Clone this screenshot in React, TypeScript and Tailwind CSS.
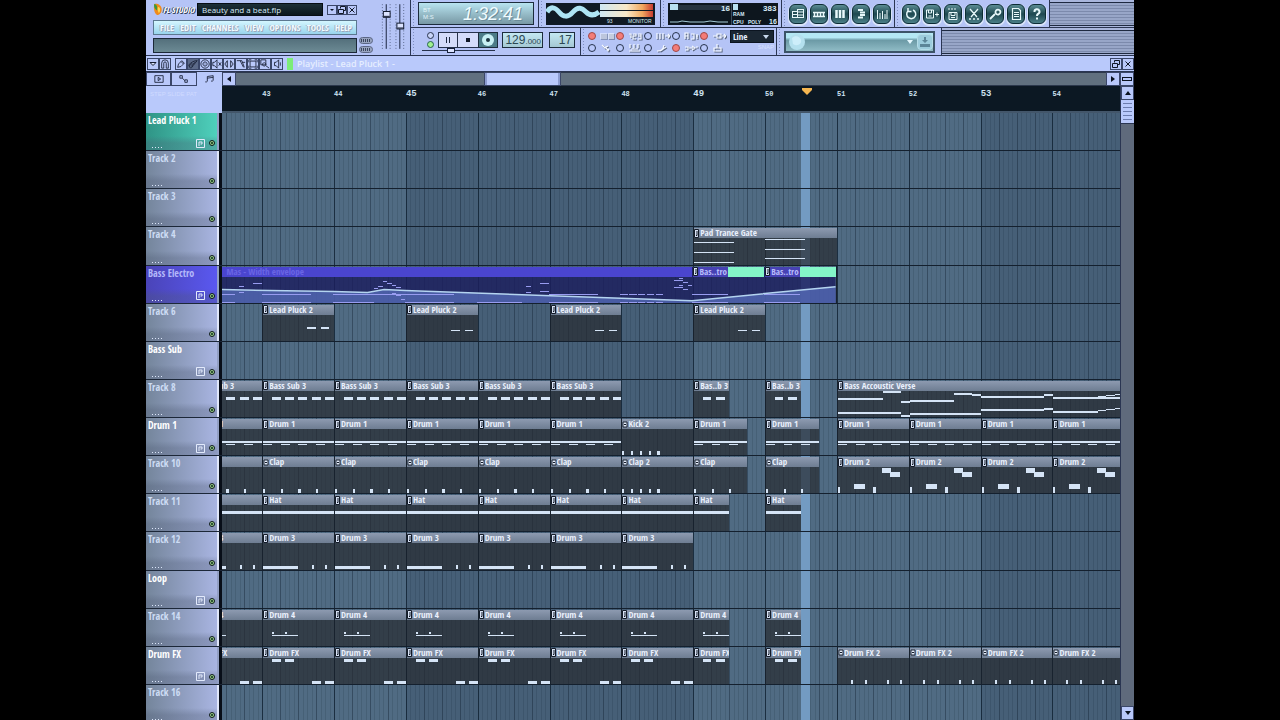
import type { ReactNode } from "react";

const FIRST_BAR = 42.44;
const VISIBLE_BARS = 12.5;

// x and w in steps (16 per bar), y and h from the top of the clip body
type Note = [x: number, y: number, w: number, h: number];

type Clip = {
  name: string;
  start: number;
  len: number;
  notes: Note[];
  audio?: boolean;
};

type Track = {
  name: string;
  group?: boolean;
  tone?: "teal" | "violet";
  clips?: Clip[];
};

const pct = (bars: number) => `${(bars / VISIBLE_BARS) * 100}%`;
const barLeft = (bar: number) => pct(bar - FIRST_BAR);

function repeat(name: string, starts: number[], len: number, notes: Note[], audio = false): Clip[] {
  return starts.map((start) => ({ name, start, len, notes, audio }));
}

const ticks = (steps: number[], y = 23, h = 4): Note[] => steps.map((s) => [s, y, 0.5, h]);
const dashes = (steps: number[], y: number, h: number): Note[] => steps.map((s) => [s, y, 2, h]);

const DRUM1: Note[] = [[0, 12, 16, 2], ...dashes([0, 4, 8, 12], 16, 1)];
const DRUM2: Note[] = [
  [3.7, 18, 2.3, 5],
  [10, 1, 2, 5],
  [11.8, 5, 2.3, 5],
  ...ticks([0, 8], 21, 6),
];
const DRUM3: Note[] = [[0, 24, 8, 3], ...ticks([11, 14], 23, 4)];
const DRUM4: Note[] = [[2, 15, 6, 2], ...ticks([2, 5], 12, 2)];
const DRUM_FX: Note[] = [...dashes([2, 5], 1, 3), ...dashes([11, 14], 24, 3)];

const VERSE: Note[] = [
  [0, 7, 10, 2], [10, 0, 4, 2], [14, 10, 2, 2], [0, 22, 14, 2], [14, 25, 2, 2],
  [16, 9, 10, 2], [26, 2, 4, 2], [30, 3, 2, 2], [16, 23, 16, 2],
  [32, 5, 14, 2], [46, 3, 2, 2], [32, 19, 14, 2], [46, 18, 2, 2],
  [48, 6, 16, 2], [58, 5, 2, 1], [60, 4, 2, 1], [62, 3, 2, 1],
  [48, 21, 10, 2], [58, 20, 2, 1], [60, 19, 2, 1], [62, 18, 2, 1],
];

const ELECTRO: Note[] = [
  [0, 18, 10, 1], [0, 26, 10, 1], [11, 9, 1, 1], [11, 16, 1, 1], [14, 6, 2, 1],
  [16, 18, 11, 1], [16, 26, 11, 1], [32, 18, 16, 1], [32, 26, 9, 1],
  [41, 11, 1, 1], [42, 9, 1, 1], [43, 4, 1, 1], [44, 6, 1, 1], [45, 8, 1, 1], [46, 10, 1, 1],
  [44, 15, 1, 1], [45, 17, 1, 1], [46, 19, 1, 1], [47, 23, 1, 1],
  [48, 18, 11, 1], [48, 26, 11, 1], [64, 26, 10, 1],
  [75, 9, 1, 1], [75, 16, 1, 1], [78, 6, 2, 1], [78, 14, 2, 1],
  [80, 18, 11, 1], [80, 26, 11, 1],
  ...[96, 98, 100, 102, 104].flatMap((s): Note[] => [[s, 18, 1.6, 1], [s, 26, 1.6, 1]]),
  [108, 3, 2, 1], [109, 1, 1, 1], [110, 5, 1, 1], [111, 8, 1, 1],
  [108, 10, 2, 1], [109, 8, 1, 1], [110, 12, 1, 1], [111, 15, 1, 1],
  [112, 18, 8, 1], [112, 26, 8, 1], [128, 18, 8, 1], [128, 26, 8, 1],
];

const TRACKS: Track[] = [
  { name: "Lead Pluck 1", group: true, tone: "teal" },
  { name: "Track 2" },
  { name: "Track 3" },
  {
    name: "Track 4",
    clips: repeat("Pad Trance Gate", [49], 2, [
      [0, 4, 9, 1], [0, 14, 9, 1], [0, 25, 9, 1],
      [16, 1, 9, 1], [16, 11, 9, 1], [16, 21, 9, 1],
    ]),
  },
  { name: "Bass Electro", group: true, tone: "violet" },
  {
    name: "Track 6",
    clips: [
      ...repeat("Lead Pluck 2", [43], 1, dashes([10, 13], 12, 2)),
      ...repeat("Lead Pluck 2", [45, 47, 49], 1, dashes([10, 13], 15, 2)),
    ],
  },
  { name: "Bass Sub", group: true },
  {
    name: "Track 8",
    clips: [
      ...repeat("Bass Sub 3", [42, 43, 44, 45, 46, 47], 1, dashes([2, 5, 8, 11, 14], 6, 3)),
      ...repeat("Bas..b 3", [49, 50], 0.5, dashes([2, 5], 6, 3)),
      ...repeat("Bass Accoustic Verse", [51], 4, VERSE),
    ],
  },
  {
    name: "Drum 1",
    group: true,
    clips: [
      ...repeat("Drum 1", [42, 43, 44, 45, 46, 47], 1, DRUM1),
      ...repeat("Kick 2", [48], 1, ticks([0, 2, 4, 6, 8]), true),
      ...repeat("Drum 1", [49, 50], 0.75, DRUM1),
      ...repeat("Drum 1", [51, 52, 53, 54], 1, DRUM1),
    ],
  },
  {
    name: "Track 10",
    clips: [
      ...repeat("Clap", [42, 43, 44, 45, 46, 47], 1, ticks([0, 4, 8, 12]), true),
      ...repeat("Clap 2", [48], 1, ticks([0, 2, 4, 6, 8]), true),
      ...repeat("Clap", [49, 50], 0.75, ticks([0, 4, 8]), true),
      ...repeat("Drum 2", [51, 52, 53, 54], 1, DRUM2),
    ],
  },
  {
    name: "Track 11",
    clips: [
      ...repeat("Hat", [42, 43, 44, 45, 46, 47, 48], 1, [[0, 6, 16, 3]]),
      ...repeat("Hat", [49, 50], 0.5, [[0, 6, 8, 3]]),
    ],
  },
  { name: "Track 12", clips: repeat("Drum 3", [42, 43, 44, 45, 46, 47, 48], 1, DRUM3) },
  { name: "Loop", group: true },
  {
    name: "Track 14",
    clips: [
      ...repeat("Drum 4", [42, 43, 44, 45, 46, 47, 48], 1, DRUM4),
      ...repeat("Drum 4", [49, 50], 0.5, DRUM4),
    ],
  },
  {
    name: "Drum FX",
    group: true,
    clips: [
      ...repeat("Drum FX", [42, 43, 44, 45, 46, 47, 48], 1, DRUM_FX),
      ...repeat("Drum FX", [49, 50], 0.5, dashes([2, 5], 1, 3)),
      ...repeat("Drum FX 2", [51, 52, 53, 54], 1, ticks([3, 6, 11, 14], 23, 4), true),
    ],
  },
  { name: "Track 16" },
];

const MENUS = ["FILE", "EDIT", "CHANNELS", "VIEW", "OPTIONS", "TOOLS", "HELP"];
const BARS = [43, 44, 45, 46, 47, 48, 49, 50, 51, 52, 53, 54];

const NARROW = "font-['Liberation_Sans_Narrow','Open_Sans_Condensed','Roboto',sans-serif]";
const LCD = "border border-[#1c2c3c] bg-linear-to-b from-[#b8e4f0] to-[#7898a4]";
const LCD_LIGHT = "border border-[#1c2c3c] bg-linear-to-b from-[#c4e8f2] to-[#a4c8d4]";

/* ---------- toolbar ---------- */

function Grip() {
  return (
    <span className="w-1 shrink-0 self-stretch bg-[radial-gradient(#7d8cc0_1px,transparent_1px)] bg-size-[3px_3px]" />
  );
}

function Panel({ className, children }: { className: string; children: ReactNode }) {
  return (
    <div className={`flex h-7 shrink-0 items-center gap-0.5 border-r border-b border-[#2a3552] bg-[#b5c4f6] pl-px ${className}`}>
      <Grip />
      {children}
    </div>
  );
}

function TinyButton({ label, className = "", children }: { label: string; className?: string; children: ReactNode }) {
  return (
    <button
      type="button"
      aria-label={label}
      className={`flex items-center justify-center border border-[#3a4668] bg-[#b9c8fa] ${className}`}
    >
      {children}
    </button>
  );
}

function RestoreIcon() {
  return (
    <svg viewBox="0 0 8 8" className="size-2 shrink-0" fill="none" stroke="#111827">
      <path d="M2.500 2.500v-2h5v4h-2M.5 3.500h5v4h-5z" />
    </svg>
  );
}

function CloseIcon() {
  return (
    <svg viewBox="0 0 8 8" className="size-2 shrink-0" stroke="#111827">
      <path d="M1.500 1.500l5 5M6.500 1.500l-5 5" />
    </svg>
  );
}

function Arrow({ d }: { d: string }) {
  return (
    <svg viewBox="0 0 8 8" className="size-2 shrink-0" fill="#0b1220">
      <path d={d} />
    </svg>
  );
}

function TitleBlock() {
  return (
    <div className="flex h-14 w-[232px] shrink-0 border-b border-[#2a3552] bg-[#b5c4f6] pt-[3px] pl-[7px]">
      <div className="flex w-[204px] flex-col">
        <div className="flex h-[13px] items-center">
          <svg viewBox="0 0 10 14" className="h-[13px] w-2.5 shrink-0">
            <path d="M1 1c3-1 8 1 8 6 0 3-2 6-5 6C1 11 0 6 1 1z" fill="#f08a1c" />
            <path d="M1 1c2 0 4 3 3 7-2-1-4-4-3-7z" fill="#3c9a3a" />
            <path d="M5 4c3 1 3 4 1 7-1-2-2-4-1-7z" fill="#ffd84a" />
          </svg>
          <span className={`${NARROW} w-[34px] shrink-0 text-[8px] leading-[13px] font-bold whitespace-nowrap text-white italic [text-shadow:1px_1px_0_#30405c,-1px_0_0_#30405c]`}>
            FL STUDIO
          </span>
          <div className="h-[13px] flex-1 truncate border border-[#070d14] bg-linear-to-b from-[#1d3038] to-[#0c161c] pl-1 font-['Open_Sans',sans-serif] text-[8px] leading-[11px] font-medium text-[#d8ecf8]">
            Beauty and a beat.flp
          </div>
          <div className="ml-1 flex">
            <TinyButton label="Minimize" className="h-2.5 w-2.5"><Arrow d="M2 3h4L4 5z" /></TinyButton>
            <TinyButton label="Restore" className="h-2.5 w-2.5"><RestoreIcon /></TinyButton>
            <TinyButton label="Close" className="h-2.5 w-2.5"><CloseIcon /></TinyButton>
          </div>
        </div>
        <nav className="mt-1 flex h-[15px] items-center justify-between border border-[#5c7890] bg-linear-to-b from-[#d4f6ff] to-[#98d4ec] pr-1 pl-1.5">
          {MENUS.map((m) => (
            <button
              key={m}
              type="button"
              className={`${NARROW} text-[9px] leading-3 font-bold text-[#f2faff] [text-shadow:1px_1px_0_#9aa8bc,-1px_0_0_#a8b4c4]`}
            >
              {m}
            </button>
          ))}
        </nav>
        <div className="mt-[3px] h-[15px] border border-[#1c2838] bg-linear-to-b from-[#54707c] to-[#6c8a94]" />
      </div>
      <div className="flex flex-col justify-end gap-0.5 pb-0.5 pl-0.5">
        {["Hint", "Snap"].map((l) => (
          <button key={l} type="button" aria-label={l} className="h-[7px] w-[14px] rounded-full border border-[#5b6684] bg-[#98a4c0] p-px">
            <span className="block h-full w-full bg-[repeating-linear-gradient(90deg,#3c465e_0_1px,transparent_1px_2px)]" />
          </button>
        ))}
      </div>
    </div>
  );
}

function MainSliders() {
  return (
    <div className="h-14 w-[33px] shrink-0 border-r border-b border-[#2a3552] bg-[#b5c4f6]">
      <svg viewBox="0 0 33 56" className="h-full w-full">
        <g stroke="#5a678c" strokeDasharray="1 2">
          <path d="M4.500 4v46M12.500 4v46M18.500 4v46M26.500 4v46" />
        </g>
        <path d="M8.500 4v46M22.500 4v46" stroke="#16203a" />
        <g fill="#dbe3ff" stroke="#0f182c">
          <rect x="5.500" y="11.500" width="7" height="6" />
          <rect x="19.500" y="23.500" width="7" height="6" />
        </g>
        <path d="M6 16.500h6M20 28.500h6" stroke="#0f182c" />
      </svg>
    </div>
  );
}

function TimePanel() {
  return (
    <Panel className="w-32">
      <div className={`${LCD} flex h-[23px] w-[116px] items-center pl-1`}>
        <span className="flex flex-col font-['Liberation_Sans',sans-serif] text-[6px] leading-[7px] text-[#e2f4fa]">
          <span>BT</span>
          <span>M:S</span>
        </span>
        <span className="ml-auto pr-2.5 font-['Liberation_Sans',sans-serif] text-[18px] leading-5 text-[#effbff] italic [text-shadow:1px_1px_0_#6c8c98]">
          1:32:41
        </span>
      </div>
    </Panel>
  );
}

function MonitorPanel() {
  return (
    <Panel className="w-[122px]">
      <svg viewBox="0 0 109 22" className="h-[22px] w-[109px] shrink-0">
        <defs>
          <linearGradient id="peak">
            <stop offset="0" stopColor="#cfe8f4" />
            <stop offset=".5" stopColor="#f8e8c8" />
            <stop offset=".8" stopColor="#f0a860" />
            <stop offset="1" stopColor="#c83c30" />
          </linearGradient>
        </defs>
        <rect width="109" height="22" fill="#101a24" />
        <path d="M1 9c4-6 8-5 12 0s9 6 14 0 9-4 13 0 8 4 13 0" fill="none" stroke="#aee4f4" strokeWidth="5" />
        <rect x="54" y="1" width="53" height="6" fill="url(#peak)" />
        <rect x="54" y="8" width="53" height="6" fill="url(#peak)" />
        <text x="61" y="20" fontSize="5" fill="#d8e8f0" fontFamily="Liberation Sans">93</text>
        <text x="82" y="20" fontSize="5" fill="#d8e8f0" fontFamily="Liberation Sans">MONITOR</text>
      </svg>
    </Panel>
  );
}

function CpuPanel() {
  return (
    <Panel className="w-[121px]">
      <svg viewBox="0 0 110 22" className="h-[22px] w-[110px] shrink-0" fontFamily="Liberation Sans" fontWeight="bold" fill="#d8ecf8">
        <rect width="110" height="22" fill="#0d161e" />
        <rect x="2" y="2" width="60" height="5" fill="#26333e" />
        <rect x="2" y="1" width="8" height="6" fill="#b8e0f0" />
        <rect x="65" y="1" width="5" height="6" fill="#b8e0f0" />
        <path d="M63.500 0v22" stroke="#3c4c5a" />
        <path d="M2 19h8l4-1 8 1h14l6-1 8 1h10" stroke="#a8ccd8" fill="none" />
        <text x="53" y="8" fontSize="8">16</text>
        <text x="95" y="8" fontSize="8">383</text>
        <text x="65" y="13" fontSize="5">RAM</text>
        <text x="65" y="21" fontSize="5">CPU</text>
        <text x="80" y="21" fontSize="5">POLY</text>
        <text x="101" y="21" fontSize="7">16</text>
      </svg>
    </Panel>
  );
}

function RoundButton({ label, children }: { label: string; children: ReactNode }) {
  return (
    <button
      type="button"
      aria-label={label}
      className="flex h-5 w-[18px] items-center justify-center rounded-md border border-[#0c2c34] bg-linear-to-b from-[#5c8e94] via-[#1e4850] to-[#4c8088] shadow-[0_1px_0_1px_#d8e4f8]"
    >
      <svg viewBox="0 0 14 14" className="size-3.5 shrink-0" fill="none" stroke="#e8f8fa">
        {children}
      </svg>
    </button>
  );
}

function WindowButtons() {
  return (
    <Panel className="w-[113px]">
      <div className="flex gap-[3px]">
        <RoundButton label="Playlist"><path d="M1.500 4.500h5M1.500 7.500h5M1.500 10.500h11M6.500 2.500h6M6.500 5h6M6.500 8h6M6.500 2v9M12.500 2v9M1.500 4v7" /></RoundButton>
        <RoundButton label="Step sequencer"><path d="M1 5.500h12M1 9.500h12M2.500 5v5M5.500 5v5M8.500 5v5M11.500 5v5" strokeWidth="1.500" /></RoundButton>
        <RoundButton label="Piano roll"><path d="M3.500 3v8M7 3v8M10.500 3v8" strokeWidth="2.500" /></RoundButton>
        <RoundButton label="Browser"><path d="M4 3h5M6 5.500h5M6 8h5M4 10.500h5" strokeWidth="2" /></RoundButton>
        <RoundButton label="Mixer"><path d="M2.500 3v9M5 6v6M7.500 4v8M10 7v5M12 3v9" /></RoundButton>
      </div>
    </Panel>
  );
}

function ShortcutButtons() {
  return (
    <Panel className="w-[155px]">
      <div className="flex gap-[3px]">
        <RoundButton label="Undo"><path d="M4 4a4.500 4.500 0 1 0 5-1M4 1v3.500h3.500" strokeWidth="1.500" /></RoundButton>
        <RoundButton label="Save new version"><path d="M1.500 3h7v8h-7zM3.500 3v3h3V3M10 7.500h4M12 5.500v4M3.500 9h3" /></RoundButton>
        <RoundButton label="Render"><path d="M3 1v2M6 1v2M9 1v2M3 5.500h8v7H3zM5 6v2.500h4V6M5 10.500h4" /></RoundButton>
        <RoundButton label="Edison"><path d="M3 2l7 8M11 2L4 10M2 12h2M6 12h2M10 12h2" strokeWidth="1.300" /></RoundButton>
        <RoundButton label="One-click recording"><path d="M2 12l5-5M8 3.500a2.500 2.500 0 1 1 2.500 4A2.500 2.500 0 0 1 8 3.500z" strokeWidth="1.800" /></RoundButton>
        <RoundButton label="Project info"><path d="M3.500 1.500h6l2 2v9h-8zM5 5.500h5M5 7.500h5M5 9.500h5" strokeWidth="1.200" /></RoundButton>
        <RoundButton label="Help"><path d="M4.500 5a2.500 2.500 0 1 1 3.500 2c-1 .5-1 1-1 2M7 10.500v2" strokeWidth="2" /></RoundButton>
      </div>
    </Panel>
  );
}

function Stripes() {
  return (
    <div className="flex h-7 flex-1 items-center border-b border-[#2a3552] bg-[#a9b6dc]">
      <div className="h-6 w-full border-y border-[#1e2940] bg-[repeating-linear-gradient(180deg,#98a6c8_0_2px,#7c8aac_2px_3px)]" />
    </div>
  );
}

function TransportPanel() {
  return (
    <Panel className="w-[170px]">
      <div className="flex w-full pt-0.5">
        <div className="mr-1 flex w-20 flex-col">
          <div className="flex h-[16px] items-stretch">
            <div className="flex w-5 flex-col items-end justify-between pr-1">
              <input type="radio" name="mode" aria-label="Pattern mode" className="size-[7px] appearance-none rounded-full border border-[#26324c] bg-[#c8d4f8]" />
              <input type="radio" name="mode" aria-label="Song mode" defaultChecked className="size-[7px] appearance-none rounded-full border border-[#26624c] bg-[#a0f090]" />
            </div>
            <button type="button" aria-label="Pause" className="flex w-5 items-center justify-center border border-[#26324c] bg-[#d4dcfa]">
              <svg viewBox="0 0 8 8" className="size-2" fill="#1c2840"><path d="M2 1h1v6H2zM5 1h1v6H5z" /></svg>
            </button>
            <button type="button" aria-label="Stop" className="flex w-5 items-center justify-center border-y border-[#26324c] bg-[#d4dcfa]">
              <svg viewBox="0 0 8 8" className="size-2" fill="#111827"><path d="M2 2h4v4H2z" /></svg>
            </button>
            <button type="button" aria-label="Record" className="flex w-5 items-center justify-center border border-[#1c2c3c] bg-[#4c7c88]">
              <span className="flex size-3 items-center justify-center rounded-full bg-[#c8f0f4]">
                <span className="size-1 rounded-full bg-[#1c3440]" />
              </span>
            </button>
          </div>
          <input
            type="range"
            aria-label="Song position"
            defaultValue={38}
            className="ml-1 h-[6px] w-[73px] appearance-none bg-[linear-gradient(#26324c,#26324c)] bg-size-[100%_1px] bg-center bg-no-repeat [&::-webkit-slider-thumb]:h-[5px] [&::-webkit-slider-thumb]:w-2 [&::-webkit-slider-thumb]:appearance-none [&::-webkit-slider-thumb]:border [&::-webkit-slider-thumb]:border-[#16203a] [&::-webkit-slider-thumb]:bg-[#dbe3ff]"
          />
        </div>
        <div className={`${LCD_LIGHT} mr-1.5 h-4 w-[41px] pr-px text-right font-['Liberation_Sans',sans-serif] text-[12px] leading-[14px] whitespace-nowrap text-[#2c4854]`}>
          129<span className="text-[8px]">.000</span>
        </div>
        <div className={`${LCD_LIGHT} h-4 w-[26px] pr-0.5 text-right font-['Liberation_Sans',sans-serif] text-[12px] leading-[14px] text-[#2c4854]`}>
          17
        </div>
      </div>
    </Panel>
  );
}

const SWITCHES: { label: string; on: boolean; d: string }[] = [
  { label: "Typing keyboard", on: true, d: "M0 2h7M0 4h7M0 6h7M9 1v6M11 1v6M13 1v6" },
  { label: "Countdown", on: true, d: "M1 2h2v4M5 2h3v2H5v3h3M10 2h3v5h-3M10 4h3" },
  { label: "Step edit", on: false, d: "M1 1v6M4 1v6M7 1v6M9 4h5M12 2l2 2-2 2" },
  { label: "Overdub", on: false, d: "M1 7V1h3v3H1M4 4v3M7 2h3v5H7M12 4h2M13 2v5" },
  { label: "Loop record", on: true, d: "M1 4h4M5 2h4v4H5zM10 4h4M12 2l2 2-2 2" },
  { label: "Metronome", on: false, d: "M2 1l3 3M5 3l4 4M4 4l4-2M7 7l2-2" },
  { label: "Wait for input", on: false, d: "M2 0v4M6 0v4M10 0v4M1 7h11M3 5h7" },
  { label: "Blend notes", on: false, d: "M1 7c4 0 6-1 7-6M4 7l6-4" },
  { label: "Auto-scroll", on: true, d: "M1 3h3v3H1M5 4h4M8 2l3 2-3 2M12 3h2" },
  { label: "Multilink", on: false, d: "M5 0v4M2 4h7v3H2z" },
];

function SwitchPanel() {
  return (
    <Panel className="w-[196px]">
      <div className="grid w-[140px] shrink-0 grid-cols-5 gap-y-1">
        {SWITCHES.map((s) => (
          <label key={s.label} className="flex items-center gap-1">
            <input
              type="checkbox"
              aria-label={s.label}
              defaultChecked={s.on}
              className="size-2 shrink-0 appearance-none rounded-full border border-[#26324c] bg-[#b9c8fa] checked:border-[#a04848] checked:bg-[#f47c78]"
            />
            <svg viewBox="0 0 14 8" className="h-2 w-3.5 drop-shadow-[1px_1px_0_#58647c]" fill="none" stroke="#f4f8ff">
              <path d={s.d} strokeWidth="1.200" />
            </svg>
          </label>
        ))}
      </div>
      <div className="flex h-full shrink-0 flex-col pt-0.5">
        <div className="flex h-[13px] w-11 items-center border border-[#0b1420] bg-[#1a2632]">
          <select
            aria-label="Snap"
            className={`${NARROW} w-full appearance-none pl-0.5 text-[9px] leading-[11px] font-bold text-[#e4eefc]`}
          >
            <option>Line</option>
          </select>
          <svg viewBox="0 0 6 4" className="mr-1 h-1 w-1.5 shrink-0" fill="#c8d8ec"><path d="M0 0h6L3 4z" /></svg>
        </div>
        <span className="text-right font-['Liberation_Sans',sans-serif] text-[6px] leading-2 text-[#d6e0ff]">SNAP</span>
      </div>
    </Panel>
  );
}

function OnlinePanel() {
  return (
    <Panel className="w-[165px]">
      <div className="flex h-[22px] w-[151px] items-center border-2 border-[#3c5468] bg-linear-to-b from-[#b4e8f4] from-25% via-[#6c9aa6] via-40% to-[#90bcc6]">
        <svg viewBox="0 0 18 18" className="ml-0.5 size-[18px]" fill="#b4e0ee">
          <circle cx="9" cy="9" r="8" />
          <path d="M4 5c3-3 8-2 9 2s-4 7-8 4" fill="#cdeefa" />
        </svg>
        <svg viewBox="0 0 6 4" className="ml-auto h-1 w-1.5" fill="#e4f8ff"><path d="M0 0h6L3 4z" /></svg>
        <button type="button" aria-label="Download" className="ml-1 flex size-4 items-center justify-center rounded-sm border border-[#b4dce8] bg-[#9cccdc]">
          <svg viewBox="0 0 12 12" className="size-3 shrink-0" fill="#5c8698">
            <path d="M5 1h2v3h2L6 7 3 4h2zM1 8h10v3H1z" />
          </svg>
        </button>
      </div>
    </Panel>
  );
}

/* ---------- playlist window ---------- */

const TOOLS: { label: string; d: string; active?: boolean }[] = [
  { label: "Draw", d: "M2 10l1-4 4-4 3 3-4 4zM6 3l3 3" },
  { label: "Paint", d: "M1 7c3-3 6-5 10-5L6 8c-1 3-3 3-4 2zM2 8l3-3M4 9l4-5", active: true },
  { label: "Delete", d: "M6 1a5 5 0 1 0 .1 0M6 3.500a2.500 2.500 0 1 0 .1 0M6 5.500v1" },
  { label: "Mute", d: "M1 4h2l3-3v10L3 8H1zM8 4l3 4M11 4L8 8" },
  { label: "Slip", d: "M4 2v8L1 6zM8 2v8l3-4z" },
  { label: "Slice", d: "M1 2h6l3 8M5 2l4 8M8 4h3" },
  { label: "Select", d: "M2.500 2.500h7v7h-7zM1 4V1h3M8 1h3v3M11 8v3H8M4 11H1V8" },
  { label: "Zoom", d: "M1 1h6v6H1zM5 4.500a2 2 0 1 0 .1 0M7 8l4 3" },
  { label: "Playback", d: "M3 4h2l3-3v10L5 8H3zM10 4v4" },
];

function ToolIcon({ d }: { d: string }) {
  return (
    <svg viewBox="0 0 12 12" className="size-2.5 shrink-0" fill="none" stroke="#141c30">
      <path d={d} />
    </svg>
  );
}

function PlaylistCaption() {
  return (
    <div className="flex h-4 shrink-0 items-center border-b border-[#2a3552] bg-[#b9c9fb] pl-px">
      <TinyButton label="Menu" className="h-3 w-3">
        <svg viewBox="0 0 8 8" className="size-2" fill="#dbe4ff" stroke="#141c30">
          <path d="M1 2.500h6L4 5.500z" />
        </svg>
      </TinyButton>
      <TinyButton label="Snap to grid" className="h-3 w-3"><ToolIcon d="M2 11V5a4 4 0 0 1 8 0v6H7.500V5a1.500 1.500 0 0 0-3 0v6z" /></TinyButton>
      <div className="ml-1 flex">
        {TOOLS.map((t) => (
          <TinyButton key={t.label} label={t.label} className={`h-3 w-3 ${t.active ? "bg-[#5c6a88]!" : ""}`}>
            <ToolIcon d={t.d} />
          </TinyButton>
        ))}
      </div>
      <span className="ml-1 h-3 w-1.5 bg-[#7cec78]" />
      <h1 className="ml-1 font-['Open_Sans',sans-serif] text-[9px] leading-3 font-semibold text-[#e6eeff]">
        Playlist - Lead Pluck 1 -
      </h1>
      <div className="ml-auto flex">
        <TinyButton label="Detach" className="h-3 w-3"><RestoreIcon /></TinyButton>
        <TinyButton label="Close playlist" className="h-3 w-3"><CloseIcon /></TinyButton>
      </div>
    </div>
  );
}

function ScrollRow() {
  return (
    <div className="flex h-3.5 shrink-0">
      <div className="grid w-[76px] shrink-0 grid-cols-3">
        <TinyButton label="Patterns"><ToolIcon d="M1 2h10v8H1zM5 4l3 2-3 2z" /></TinyButton>
        <TinyButton label="Automation"><ToolIcon d="M1 2h3v3H1zM4 5l3 3M7 7h3v3H7z" /></TinyButton>
        <button type="button" aria-label="Notes" className="flex items-center justify-center bg-[#b9c9fb]">
          <ToolIcon d="M4 9V3l7-1v6M4 5l7-1M1.500 9.500h2M8.500 8.500h2" />
        </button>
      </div>
      <TinyButton label="Scroll left" className="w-3.5"><Arrow d="M6 1v6L2 4z" /></TinyButton>
      <div className="flex flex-1 border-y border-[#2c384c] bg-[#61707f]">
        <div className="ml-[28.6%] h-full w-[8.6%] border-x-2 border-[#8c9cd0] bg-[#b9c9fb] outline outline-[#3a4668]" />
      </div>
      <TinyButton label="Scroll right" className="w-3.5"><Arrow d="M2 1v6l4-3z" /></TinyButton>
      <TinyButton label="Zoom bar" className="w-3.5">
        <span className="h-1 w-2.5 border border-[#0b1220]" />
      </TinyButton>
    </div>
  );
}

function Ruler() {
  return (
    <div className="relative h-[27px] flex-1 overflow-hidden border-b-2 border-[#43566a] bg-[#0c1823]">
      {BARS.map((bar) => (
        <span
          key={bar}
          className={`absolute top-1 font-['Liberation_Mono',monospace] leading-2 font-bold text-[#cfe2f2] ${
            bar % 4 === 1 ? "text-[9px]" : "text-[7px]"
          }`}
          style={{ left: barLeft(bar) }}
        >
          {bar}
        </span>
      ))}
      <svg viewBox="0 0 10 7" className="absolute top-0.5 h-[7px] w-2.5" style={{ left: barLeft(50.52) }}>
        <path d="M0 0h10v2L5 7 0 2z" fill="#f6b650" />
      </svg>
    </div>
  );
}

function TrackHeader({ track }: { track: Track }) {
  const tone =
    track.tone === "teal"
      ? "from-[#2f9486] to-[#4fd0bc]"
      : track.tone === "violet"
        ? "from-[#4a44b8] to-[#5a58f0]"
        : "from-[#74859b] to-[#a9b5e2]";
  const color = track.tone === "violet" ? "text-[#b4b8fa]" : track.group ? "text-white" : "text-[#cddcf4]";
  return (
    <div className="flex min-h-0 border-b border-[#1c2738]">
      <div className={`relative flex-1 bg-linear-to-r ${tone}`}>
        <span className="absolute inset-x-0 bottom-0 h-3.5 bg-linear-to-b from-transparent via-[#4c5870]/30 to-[#4c5870]/30" />
        <p className={`${NARROW} relative pt-px pl-0.5 text-[10px] leading-3 font-bold whitespace-nowrap ${color}`}>
          {track.name}
        </p>
        <div className="absolute inset-x-0 bottom-0.5 flex h-2.5 items-center gap-1 pr-0.5 pl-1.5">
          <span className="mr-auto h-px w-2.5 self-end bg-[repeating-linear-gradient(90deg,#dce6fa_0_1px,transparent_1px_3px)]" />
          {track.group && (
            <svg viewBox="0 0 9 9" className="size-[9px]" fill="none" stroke="#e2eafc">
              <path d="M.5.5h8v8h-8zM3 7V3h3v2H4.500" />
            </svg>
          )}
          <input
            type="checkbox"
            aria-label={`Enable ${track.name}`}
            defaultChecked
            className="size-1.5 appearance-none rounded-full border border-[#0e1c18] bg-[radial-gradient(#1c4024_20%,#a8dc98_60%)]"
          />
        </div>
      </div>
      <span className={`w-0.5 ${track.group ? "bg-[#93a0c4]" : "bg-[#dfe6fa]"}`} />
      <span className="w-[3px] bg-[#080e18]" />
    </div>
  );
}

function Notes({ clip, fill }: { clip: Clip; fill: string }) {
  return (
    <svg
      viewBox={`0 0 ${clip.len * 16} 27`}
      preserveAspectRatio="none"
      shapeRendering="crispEdges"
      className="block min-h-0 w-full flex-1"
      fill={fill}
    >
      {clip.notes.map(([x, y, w, h], i) => (
        <rect key={i} x={x} y={y} width={w} height={h} />
      ))}
    </svg>
  );
}

function ClipTitle({ name, audio }: { name: string; audio?: boolean }) {
  return (
    <>
      <svg viewBox="0 0 6 9" className="h-[9px] w-1.5 shrink-0">
        {audio ? (
          <path d="M1 2h4v5H1z" fill="#e4ecfa" stroke="#1c2634" />
        ) : (
          <path d="M.5 .5h4v8h-4z" fill="#d8e2f4" stroke="#131b28" />
        )}
        <path d={audio ? "M2 4.500h2" : "M3 2v4.500H2"} fill="none" stroke="#131b28" />
      </svg>
      {name}
    </>
  );
}

function ClipBox({ clip }: { clip: Clip }) {
  return (
    <div
      className="absolute inset-y-0 flex flex-col overflow-hidden border-l border-[#18222e] pt-px"
      style={{ left: barLeft(clip.start), width: pct(clip.len) }}
    >
      <div className={`${NARROW} flex h-2.5 shrink-0 items-center bg-linear-to-b from-[#8d9ab0] to-[#6e7d92] text-[9px] leading-[10px] font-bold whitespace-nowrap text-[#eaf0fc]`}>
        <ClipTitle name={clip.name} audio={clip.audio} />
      </div>
      <div className="flex min-h-0 flex-1 bg-[#262b30]/70">
        <Notes clip={clip} fill="#d5e4f6" />
      </div>
    </div>
  );
}

function ElectroLane() {
  const curve = "0,12 7,13 32,15 39.600,16 43.300,13 48,14 112,24.500 144,10";
  return (
    <div
      className="absolute inset-y-0 flex flex-col overflow-hidden border-r border-[#18222e] pt-px"
      style={{ left: barLeft(42), width: pct(9) }}
    >
      <div className={`${NARROW} relative flex h-2.5 shrink-0 items-center bg-[#4a45cf] pl-9 text-[9px] leading-[10px] font-bold whitespace-nowrap text-[#6a66e4]`}>
        Mas - Width envelope
        {[49, 50].map((bar) => (
          <div
            key={bar}
            className="absolute inset-y-0 flex w-1/9 bg-[#84f6c8] text-[#b8bcfa]"
            style={{ left: `${((bar - 42) / 9) * 100}%` }}
          >
            <span className="flex w-1/2 items-center overflow-hidden border-l border-[#1c1f60] bg-[#4742b4]">
              <ClipTitle name="Bas..tro" />
            </span>
          </div>
        ))}
      </div>
      <svg viewBox="0 0 144 27" preserveAspectRatio="none" className="block min-h-0 w-full flex-1">
        <rect width="144" height="27" fill="#1c1f5e" fillOpacity=".82" />
        <polygon points={`0,27 ${curve} 144,27`} fill="#5a72c0" fillOpacity=".7" />
        <g shapeRendering="crispEdges" fill="#989cf0">
          {ELECTRO.map(([x, y, w, h], i) => (
            <rect key={i} x={x} y={y} width={w} height={h} />
          ))}
        </g>
        <polyline points={curve} fill="none" stroke="#b4d4f0" strokeWidth="1.500" vectorEffect="non-scaling-stroke" />
      </svg>
    </div>
  );
}

function GridLines() {
  const steps = Array.from({ length: 208 }, (_, i) => i).filter((i) => 42 + i / 16 > FIRST_BAR);
  return (
    <svg className="absolute inset-0 h-full w-full" shapeRendering="crispEdges">
      <rect width="100%" height="100%" fill="#506b83" />
      <rect x={barLeft(45)} width={pct(4)} height="100%" fill="#465f77" />
      <rect x={barLeft(53)} width={pct(4)} height="100%" fill="#465f77" />
      {steps.map((i) => (
        <rect
          key={i}
          x={barLeft(42 + i / 16)}
          width="1"
          height="100%"
          fill="#0e1f30"
          fillOpacity={i % 16 === 0 ? 0.8 : i % 4 === 0 ? 0.4 : 0.15}
        />
      ))}
      <rect x={barLeft(50.5)} width={pct(0.12)} height="100%" fill="#739bc2" />
    </svg>
  );
}

function VerticalScroll() {
  return (
    <div className="flex w-3.5 shrink-0 flex-col border-l border-[#2a3552] bg-[#5f6a7c]">
      <TinyButton label="Scroll up" className="h-3.5"><Arrow d="M1 6h6L4 2z" /></TinyButton>
      <div className="flex h-6 flex-col justify-center gap-[3px] border-b border-[#2a3552] bg-[#b9c9fb] px-0.5">
        {[0, 1, 2, 3, 4].map((i) => (
          <span key={i} className="h-px bg-[#6c7cae]" />
        ))}
      </div>
      <TinyButton label="Scroll down" className="mt-auto h-3.5"><Arrow d="M1 2h6L4 6z" /></TinyButton>
    </div>
  );
}

export default function App() {
  return (
    <div className="h-screen overflow-hidden bg-black px-[146px]">
      <div className="flex h-full flex-col overflow-hidden bg-[#b5c4f6]">
        <header className="flex shrink-0">
          <TitleBlock />
          <MainSliders />
          <div className="min-w-0 flex-1">
            <div className="flex">
              <TimePanel />
              <MonitorPanel />
              <CpuPanel />
              <WindowButtons />
              <ShortcutButtons />
              <Stripes />
            </div>
            <div className="flex">
              <TransportPanel />
              <SwitchPanel />
              <OnlinePanel />
              <Stripes />
            </div>
          </div>
        </header>

        <PlaylistCaption />
        <ScrollRow />

        <div className="flex min-h-0 flex-1">
          <div className="flex min-w-0 flex-1 flex-col">
            <div className="flex shrink-0">
              <div className="w-[76px] shrink-0 bg-[#b9c9fb] pt-1 pl-1 font-['Liberation_Sans',sans-serif] text-[6px] leading-2 text-[#cfdaff]">
                STEP SLIDE PAT
              </div>
              <Ruler />
            </div>
            <div className="min-h-0 flex-1 overflow-hidden">
              <div className="flex h-[610px]">
                <div className="grid w-[76px] shrink-0 grid-rows-16">
                  {TRACKS.map((t) => (
                    <TrackHeader key={t.name} track={t} />
                  ))}
                </div>
                <div className="relative min-w-0 flex-1 overflow-hidden">
                  <GridLines />
                  <div className="relative grid h-full grid-rows-16">
                    {TRACKS.map((t) => (
                      <div key={t.name} className="relative min-h-0 border-b border-[#14202e]">
                        {t.tone === "violet" && <ElectroLane />}
                        {t.clips?.map((c) => (
                          <ClipBox key={c.start} clip={c} />
                        ))}
                      </div>
                    ))}
                  </div>
                </div>
              </div>
            </div>
          </div>
          <VerticalScroll />
        </div>
      </div>
    </div>
  );
}
